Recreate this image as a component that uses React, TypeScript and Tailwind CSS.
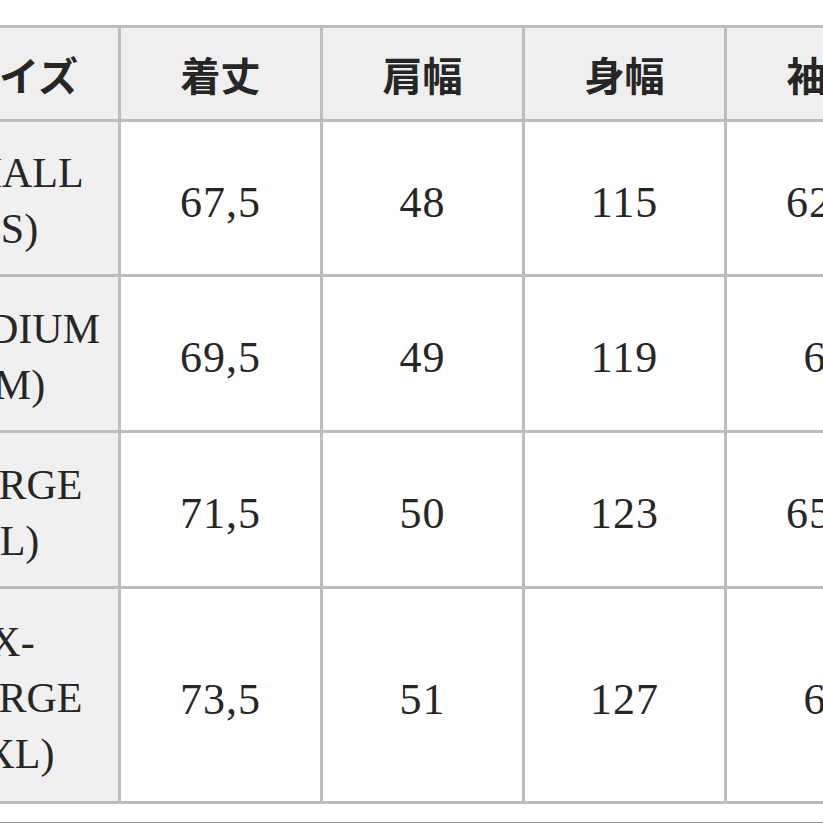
import React from "react";

const HEADERS = ["サイズ", "着丈", "肩幅", "身幅", "袖丈"];

const ROWS: { size: string[]; values: string[]; height: string }[] = [
  { size: ["SMALL", "(S)"], values: ["67,5", "48", "115", "62,5"], height: "h-[152px]" },
  { size: ["MEDIUM", "(M)"], values: ["69,5", "49", "119", "64"], height: "h-[153px]" },
  { size: ["LARGE", "(L)"], values: ["71,5", "50", "123", "65,5"], height: "h-[153px]" },
  { size: ["X-", "LARGE", "(XL)"], values: ["73,5", "51", "127", "67"], height: "h-[212px]" },
];

const serif = "font-['Liberation_Serif','DejaVu_Serif',serif]";
const jp = "font-['Noto_Sans_CJK_JP',sans-serif]";

export default function App() {
  return (
    <div className="w-[823px] h-[823px] bg-white overflow-hidden text-[#262626]">
      <div className="pt-[25px] ml-[-84px]">
        <div className="grid grid-cols-[199px_199px_199px_199px_199px] gap-[3px] p-[3px] bg-[#bdbdbd] w-fit">
          {HEADERS.map((h) => (
            <div
              key={h}
              className={`h-[91px] bg-[#efefef] flex items-center justify-center text-[40px] font-bold ${jp}`}
            >
              {h}
            </div>
          ))}
          {ROWS.map((row) => (
            <React.Fragment key={row.size.join("")}>
              <div
                className={`${row.height} bg-[#f0f0f0] flex flex-col items-center justify-center pt-[6px] pr-[12px] text-[42px] leading-[56px] ${serif}`}
              >
                {row.size.map((s) => (
                  <span key={s}>{s}</span>
                ))}
              </div>
              {row.values.map((v, i) => (
                <div
                  key={i}
                  className={`${row.height} bg-white flex items-center justify-center pt-[9px] text-[44px] tracking-[1px] ${serif}`}
                >
                  {v}
                </div>
              ))}
            </React.Fragment>
          ))}
        </div>
      </div>
      <div className="mt-[18px] h-px bg-[#9a9a9a]" />
    </div>
  );
}
